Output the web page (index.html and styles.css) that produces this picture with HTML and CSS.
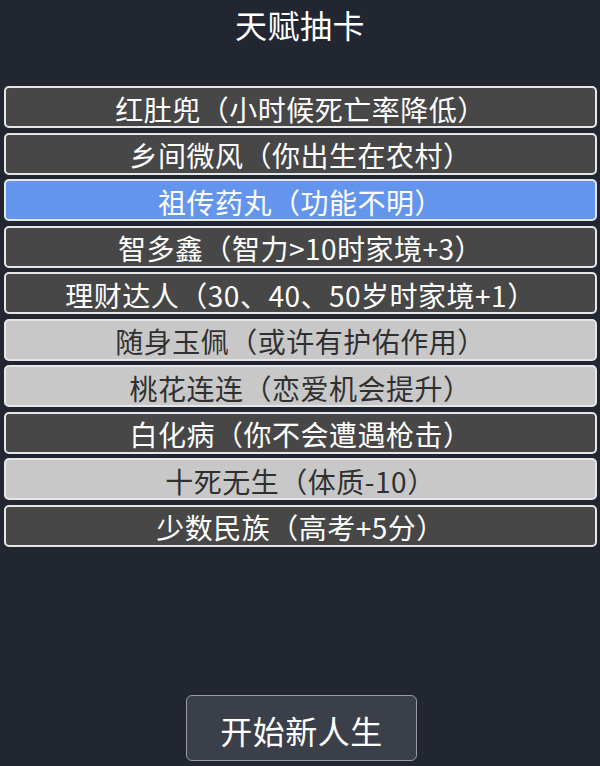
FILE: index.html
```html
<!DOCTYPE html>
<html lang="zh">
<head>
<meta charset="utf-8">
<link rel="stylesheet" href="styles.css">
</head>
<body>
<div class="page">
  <h1 class="title">天赋抽卡</h1>
  <ul class="list">
    <li class="item dark">红肚兜（小时候死亡率降低）</li>
    <li class="item dark">乡间微风（你出生在农村）</li>
    <li class="item blue">祖传药丸（功能不明）</li>
    <li class="item dark">智多鑫（智力&gt;10时家境+3）</li>
    <li class="item dark">理财达人（30、40、50岁时家境+1）</li>
    <li class="item light">随身玉佩（或许有护佑作用）</li>
    <li class="item light">桃花连连（恋爱机会提升）</li>
    <li class="item dark">白化病（你不会遭遇枪击）</li>
    <li class="item light">十死无生（体质-10）</li>
    <li class="item dark">少数民族（高考+5分）</li>
  </ul>
  <div class="footer">
    <button class="start">开始新人生</button>
  </div>
</div>
</body>
</html>
```
FILE: styles.css
```css
html, body {
  margin: 0;
  padding: 0;
  background: #222631;
  height: 100%;
}
.page {
  width: 600px;
  height: 766px;
  display: flex;
  flex-direction: column;
  font-family: "Noto Sans CJK SC", "Noto Sans", sans-serif;
  color: #fff;
}
.title {
  margin: 0;
  height: 48px;
  display: flex;
  align-items: center;
  justify-content: center;
  font-size: 32px;
  font-weight: 400;
  line-height: 1;
  letter-spacing: 0.5px;
}
.list {
  list-style: none;
  margin: 38px 0 0 0;
  padding: 0 3px 0 4px;
  display: flex;
  flex-direction: column;
  gap: 4.5px;
}
.item {
  box-sizing: border-box;
  height: 42px;
  border: 2px solid #e6e6e6;
  border-radius: 5px;
  display: flex;
  align-items: center;
  justify-content: center;
  font-size: 28px;
  line-height: 1;
  letter-spacing: 0.5px;
  padding-top: 3px;
}
.dark {
  background: #474747;
  color: #fff;
}
.light {
  background: #c8c8c8;
  color: #303030;
}
.blue {
  background: #6495ed;
  color: #fff;
}
.footer {
  flex: 1;
  display: flex;
  align-items: flex-end;
  justify-content: center;
  padding-bottom: 5px;
}
.start {
  box-sizing: border-box;
  width: 231px;
  height: 66px;
  margin-left: 3px;
  background: #3b3f4a;
  border: 1px solid #9a9ca2;
  border-radius: 6px;
  color: #fff;
  font-family: "Noto Sans CJK SC", "Noto Sans", sans-serif;
  font-size: 32px;
  line-height: 1;
  letter-spacing: 0.5px;
  padding: 4px 0 0 0;
}
```
